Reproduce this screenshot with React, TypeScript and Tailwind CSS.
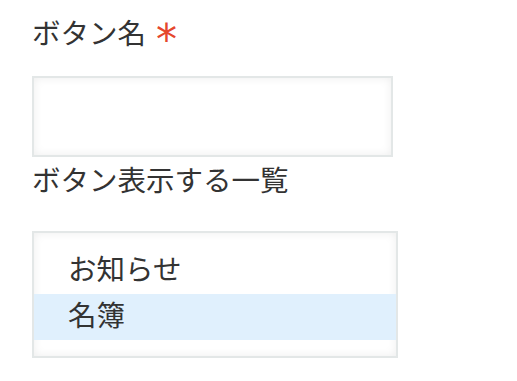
export default function App() {
  const items = ["お知らせ", "名簿"];
  const selected = 1;
  return (
    <div
      className="w-[517px] h-[381px] bg-white text-[#333] pl-8 pt-[12px]"
      style={{ fontFamily: '"Noto Sans CJK JP", "Noto Sans", sans-serif' }}
    >
      <div className="flex h-[40px] items-start text-[28.5px] leading-[40px]">
        <span>ボタン名</span>
        <span
          className="ml-[10px] translate-y-[8px] text-[#e5472c] text-[42px] leading-[40px]"
          style={{ fontFamily: '"DejaVu Sans", sans-serif' }}
        >
          *
        </span>
      </div>
      <div className="mt-[24px] w-[361px] h-[81px] border-2 border-[#e3e7e7] bg-white shadow-[inset_0_0_10px_rgba(0,0,0,0.07)]" />
      <div className="mt-[2px] text-[28.5px] leading-[40px]">ボタン表示する一覧</div>
      <div className="mt-[32px] w-[366px] h-[127px] border-2 border-[#e3e7e7] bg-white shadow-[inset_0_0_10px_rgba(0,0,0,0.07)] pt-[15px]">
        {items.map((it, i) => (
          <div
            key={it}
            className={`h-[46px] pl-[34px] pb-[6px] flex items-center text-[28.5px] ${
              i === selected ? "bg-[#e0f0fd]" : ""
            }`}
          >
            {it}
          </div>
        ))}
      </div>
    </div>
  );
}
